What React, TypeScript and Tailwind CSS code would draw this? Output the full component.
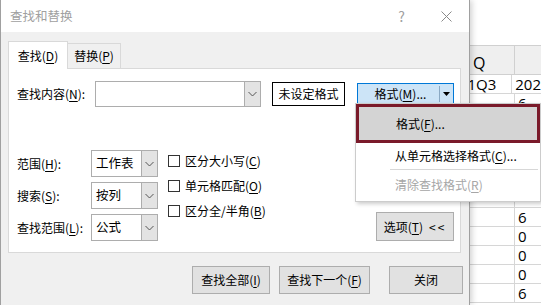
import React from "react";

const U = ({ c }: { c: string }) => (
  <span className="underline underline-offset-[2px] decoration-[1px]">{c}</span>
);

const Chevron = () => (
  <svg width="9" height="6" viewBox="0 0 9 6">
    <path d="M0.5 1 L4.5 5 L8.5 1" fill="none" stroke="#555" strokeWidth="1" />
  </svg>
);

const Select = ({ value, w }: { value: string; w: string }) => (
  <div className={`flex h-[27px] ${w} border border-[#adadad] bg-white`}>
    <div className="flex-1 flex items-center pl-[4px] text-[12.5px]">{value}</div>
    <div className="w-[16px] bg-[#e3e3e3] border-l border-[#adadad] flex items-center justify-center">
      <Chevron />
    </div>
  </div>
);

const Check = ({ children }: { children: React.ReactNode }) => (
  <div className="flex h-[25px] items-center">
    <div className="w-[12px] h-[12px] border border-[#333] bg-white" />
    <div className="ml-[5px]">{children}</div>
  </div>
);

const Btn = ({ children, w }: { children: React.ReactNode; w: string }) => (
  <div
    className={`${w} h-[28px] border border-[#adadad] bg-[#e1e1e1] flex items-center justify-center`}
  >
    {children}
  </div>
);

const rows: [string, string][] = [
  ["1Q3", "202"],
  ["", "6"],
  ["", ""],
  ["", ""],
  ["", ""],
  ["", ""],
  ["", ""],
  ["", "6"],
  ["", "0"],
  ["", "0"],
  ["", "0"],
  ["", "6"],
];

export default function App() {
  return (
    <div
      className="relative w-[541px] h-[305px] overflow-hidden bg-white text-black text-[12px]"
      style={{ fontFamily: '"Noto Sans CJK SC", "Noto Sans", sans-serif' }}
    >
      {/* spreadsheet behind */}
      <div className="pt-[45px]" style={{ fontFamily: '"Open Sans", "Liberation Sans", sans-serif' }}>
        <div className="flex h-[30px] border-t border-b border-[#d0d0d0] bg-[#efefef] text-[16px] leading-none">
          <div className="w-[455px]" />
          <div className="w-[60px] border-r border-[#d0d0d0] flex items-end pb-[3px] pl-[18px]">Q</div>
          <div className="flex-1" />
        </div>
        {rows.map((r, i) => (
          <div key={i} className="flex h-[19px] border-b border-[#d6d6d6] text-[15px] leading-none">
            <div className="w-[455px]" />
            <div className="w-[60px] border-r border-[#d6d6d6] flex items-center pl-[15px]">{r[0]}</div>
            <div className="flex-1 flex items-center pl-[3px]">{r[1]}</div>
          </div>
        ))}
      </div>

      {/* dialog window */}
      <div className="absolute left-0 top-0 w-[470px] h-[305px] border-l border-r border-[#a0a0a0] bg-[#f0f0f0] flex flex-col shadow-[2px_0_6px_rgba(0,0,0,0.18)]">
        <div className="h-[32px] bg-white flex items-center pl-[9px] text-[12.5px] text-[#a0a0a0] leading-none">
          <span>查找和替换</span>
          <span className="ml-auto text-[14px]">?</span>
          <span className="ml-[36px] mr-[17px] flex items-center">
            <svg width="11" height="11" viewBox="0 0 11 11">
              <path d="M0.5 0.5 L10.5 10.5 M10.5 0.5 L0.5 10.5" stroke="#8a8a8a" strokeWidth="1" />
            </svg>
          </span>
        </div>

        <div className="pl-[7px] pr-[8px] pt-[9px]">
          <div className="flex items-end h-[27px] leading-none">
            <div className="relative z-10 -mb-px w-[60px] h-[28px] bg-white border border-b-0 border-[#d9d9d9] flex items-center justify-center">
              查找(<U c="D" />)
            </div>
            <div className="w-[53px] h-[25px] bg-[#f0f0f0] border border-l-0 border-b-0 border-[#d9d9d9] flex items-center justify-center">
              替换(<U c="P" />)
            </div>
          </div>

          <div className="h-[185px] bg-white border border-[#d9d9d9] pl-[8px] leading-none">
            <div className="mt-[12px] flex items-center h-[26px]">
              <div className="w-[78px]">
                查找内容(<U c="N" />):
              </div>
              <div className="flex w-[166px] h-[26px] border border-[#adadad] bg-white">
                <div className="flex-1" />
                <div className="w-[16px] bg-[#e3e3e3] border-l border-[#adadad] flex items-center justify-center">
                  <Chevron />
                </div>
              </div>
              <div className="ml-[11px] w-[73px] h-[24px] border border-black flex items-center justify-center">
                未设定格式
              </div>
              <div className="ml-[12px] w-[97px] h-[22px] border border-[#0078d7] bg-[#cce4f7] flex items-center">
                <div className="flex-1 flex items-center justify-center pl-[4px]">
                  格式(<U c="M" />)...
                </div>
                <div className="h-[16px] border-l border-[#8aa9c4]" />
                <div className="w-[13px] flex items-center justify-center">
                  <svg width="7" height="4" viewBox="0 0 7 4">
                    <path d="M0 0 L7 0 L3.5 4 Z" fill="#000" />
                  </svg>
                </div>
              </div>
            </div>

            <div className="mt-[43px] flex">
              <div className="flex flex-col gap-[5px]">
                <div className="flex items-center">
                  <div className="w-[74px]">
                    范围(<U c="H" />):
                  </div>
                  <Select value="工作表" w="w-[67px]" />
                </div>
                <div className="flex items-center">
                  <div className="w-[74px]">
                    搜索(<U c="S" />):
                  </div>
                  <Select value="按列" w="w-[67px]" />
                </div>
                <div className="flex items-center">
                  <div className="w-[74px]">
                    查找范围(<U c="L" />):
                  </div>
                  <Select value="公式" w="w-[67px]" />
                </div>
              </div>
              <div className="ml-[10px] -mt-[2px] flex flex-col">
                <Check>
                  区分大小写(<U c="C" />)
                </Check>
                <Check>
                  单元格匹配(<U c="O" />)
                </Check>
                <Check>
                  区分全/半角(<U c="B" />)
                </Check>
              </div>
              <div className="ml-auto mr-[6px] mt-[62px] w-[78px] h-[29px] border border-[#adadad] bg-[#e1e1e1] flex items-center justify-center">
                选项(<U c="T" />)<span className="ml-[6px] tracking-[2px]">&lt;&lt;</span>
              </div>
            </div>
          </div>
        </div>

        <div className="mt-[13px] flex pl-[191px] leading-none">
          <Btn w="w-[78px]">
            查找全部(<U c="I" />)
          </Btn>
          <div className="ml-[9px]">
            <Btn w="w-[91px]">
              查找下一个(<U c="F" />)
            </Btn>
          </div>
          <div className="ml-[19px]">
            <Btn w="w-[74px]">关闭</Btn>
          </div>
        </div>
      </div>

      {/* dropdown menu */}
      <div className="absolute left-[355px] top-[103px] w-[186px] h-[99px] bg-white border border-[#cccccc] shadow-[2px_2px_4px_rgba(0,0,0,0.2)] leading-none">
        <div className="h-[39px] border-[3px] border-[#7a1a2a] bg-[#d4d4d4] flex items-center pl-[37px]">
          格式(<U c="F" />)...
        </div>
        <div className="h-[26px] flex items-center pl-[39px]">
          从单元格选择格式(<U c="C" />)...
        </div>
        <div className="ml-[34px] mr-[2px] border-t border-[#d7d7d7]" />
        <div className="h-[30px] flex items-center pl-[39px] text-[#a6a6a6]">
          清除查找格式(<U c="R" />)
        </div>
      </div>
    </div>
  );
}
